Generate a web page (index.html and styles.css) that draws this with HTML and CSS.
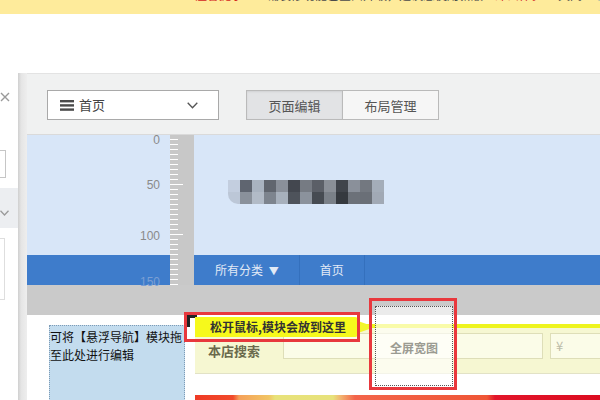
FILE: index.html
```html
<!DOCTYPE html>
<html lang="zh-CN">
<head>
<meta charset="utf-8">
<title>页面编辑</title>
<link rel="stylesheet" href="styles.css">
</head>
<body>
<div class="notice">
  <div class="notice-line"><span class="red">温馨提示：</span><span class="dark">旺铺装修功能已全面升级，建议您使用新版</span><span class="red">立即去体验</span><span class="dark gap">关闭</span><span class="link">帮助中心</span></div>
</div>
<div class="topspace"></div>
<div class="workspace">
  <aside class="side">
    <div class="close">
      <svg width="10" height="10" viewBox="0 0 10 10"><path d="M1 1L9 9M9 1L1 9" stroke="#9a9a9a" stroke-width="1.4" fill="none"/></svg>
    </div>
    <div class="side-input"></div>
    <div class="side-bar">
      <svg width="9" height="6" viewBox="0 0 9 6"><path d="M0.5 0.8L4.5 5L8.5 0.8" stroke="#9a9a9a" stroke-width="1.3" fill="none"/></svg>
    </div>
    <div class="side-box"></div>
  </aside>
  <div class="side-shadow"></div>
  <main class="main">
    <div class="toolbar">
      <div class="select">
        <svg class="menu-icon" width="14" height="11" viewBox="0 0 14 11"><rect x="0" y="0" width="14" height="2.4" fill="#4a4a4a"/><rect x="0" y="4.2" width="14" height="2.4" fill="#4a4a4a"/><rect x="0" y="8.4" width="14" height="2.4" fill="#4a4a4a"/></svg>
        <span class="select-text">首页</span>
        <svg width="11" height="7" viewBox="0 0 11 7"><path d="M0.7 0.7L5.5 5.8L10.3 0.7" stroke="#555" stroke-width="1.3" fill="none"/></svg>
      </div>
      <div class="tabs">
        <div class="tab active">页面编辑</div>
        <div class="tab">布局管理</div>
      </div>
    </div>
    <div class="canvas">
      <div class="header">
        <div class="logo">
          <span></span><span></span><span></span><span></span><span></span><span></span><span></span><span></span><span></span><span></span><span></span><span></span><span></span>
          <span></span><span></span><span></span><span></span><span></span><span></span><span></span><span></span><span></span><span></span><span></span><span></span><span></span>
        </div>
      </div>
      <nav class="nav">
        <div class="nav-item">所有分类 <span class="caret">▼</span></div>
        <div class="nav-item">首页</div>
      </nav>
      <div class="band"></div>
      <div class="content">
        <div class="float-zone">可将【悬浮导航】模块拖至此处进行编辑</div>
        <div class="modules">
          <div class="search">
            <span class="search-label">本店搜索</span>
            <div class="search-input"></div>
            <div class="price-input">¥</div>
          </div>
          <div class="promo"></div>
        </div>
      </div>

      <div class="ruler">
        <span class="tick-long t50"></span>
        <span class="tick-long t100"></span>
        <span class="rl r0">0</span>
        <span class="rl r50">50</span>
        <span class="rl r100">100</span>
        <span class="rl r150">150</span>
      </div>

      <div class="drop-corner"></div>
      <div class="drop-tip">松开鼠标,模块会放到这里</div>
      <div class="mark mark-tip"></div>
      <div class="wide-block">全屏宽图</div>
      <div class="mark mark-wide"></div>
    </div>
  </main>
</div>
</body>
</html>
```

FILE: styles.css
```css
* { box-sizing: border-box; margin: 0; padding: 0; }
html, body { width: 600px; height: 400px; overflow: hidden; background: #fff; }
body { font-family: "Noto Sans CJK SC", "Noto Sans", sans-serif; font-size: 12px; color: #333; }

/* top notice (only the lower edge of its text line is in view) */
.notice { height: 14px; background: #feeb9b; overflow: hidden; }
.notice-line { margin-top: -11px; padding-left: 195px; font-size: 12px; line-height: 12px; white-space: nowrap; }
.notice .red { color: #d3241c; }
.notice .dark { color: #4a4a4a; }
.notice .gap { margin-left: 15px; margin-right: 11px; }
.notice .link { color: #7193ab; }

.topspace { height: 59px; }

/* workspace */
.workspace { display: flex; height: 327px; }

.side { width: 18px; flex: none; background: #fff; overflow: hidden; display: flex; flex-direction: column; }
.close { margin-top: 19px; height: 10px; line-height: 0; }
.side-input { margin-top: 48px; margin-left: -100px; width: 106px; height: 28px; flex: none; border: 1px solid #c6c6c6; background: #fff; }
.side-bar { margin-top: 10px; height: 40px; flex: none; background: #eceef1; padding-top: 22px; line-height: 0; }
.side-box { margin-top: 10px; margin-left: -100px; width: 105px; height: 62px; flex: none; border: 1px solid #dedede; }

.side-shadow { width: 9px; flex: none; background: linear-gradient(to right, #cfcfcf, #e5e5e5 35%, #eeeeee); }

.main { flex: 1; min-width: 0; display: flex; flex-direction: column; }

/* toolbar */
.toolbar { height: 62px; flex: none; background: #f0f1f1; border-top: 1px solid #e3e3e3; border-bottom: 1px solid #dadada; padding: 16px 0 0 20px; display: flex; align-items: flex-start; gap: 27px; }
.select { width: 172px; height: 30px; border: 1px solid #a9a9a9; background: #fff; display: flex; align-items: center; padding: 0 20px 0 12px; }
.menu-icon { flex: none; }
.select-text { flex: 1; margin-left: 5px; font-size: 13px; color: #444; line-height: 28px; }
.tabs { display: flex; }
.tab { width: 97px; height: 30px; border: 1px solid #bababa; background: #f6f6f6; font-size: 13px; color: #555; display: flex; align-items: center; justify-content: center; }
.tab + .tab { border-left: none; width: 96px; }
.tab.active { background: #e2e3e5; box-shadow: inset 0 1px 2px rgba(0,0,0,0.08); }

/* canvas */
.canvas { position: relative; flex: 1; }
.header { height: 120px; background: #d8e6f8; padding: 45px 0 0 201px; }
.logo { display: grid; grid-template-columns: repeat(13, 12px); grid-auto-rows: 12px; width: max-content; }
.logo span { display: block; }
.logo span:nth-child(1) { background: #c3cedf; }
.logo span:nth-child(2) { background: #5f6570; }
.logo span:nth-child(3) { background: #a9b3c0; }
.logo span:nth-child(4) { background: #60656e; }
.logo span:nth-child(5) { background: #8a909a; }
.logo span:nth-child(6) { background: #43474f; }
.logo span:nth-child(7) { background: #767b83; }
.logo span:nth-child(8) { background: #5b5f67; }
.logo span:nth-child(9) { background: #8a8f97; }
.logo span:nth-child(10) { background: #40444b; }
.logo span:nth-child(11) { background: #8a909a; }
.logo span:nth-child(12) { background: #737880; }
.logo span:nth-child(13) { background: #a4adb9; }
.logo span:nth-child(14) { background: #bcc7d7; border-bottom-left-radius: 10px; }
.logo span:nth-child(15) { background: #8a919b; }
.logo span:nth-child(16) { background: #b2bbc7; }
.logo span:nth-child(17) { background: #7d848e; }
.logo span:nth-child(18) { background: #a7b0bc; }
.logo span:nth-child(19) { background: #4e535b; }
.logo span:nth-child(20) { background: #8b929c; }
.logo span:nth-child(21) { background: #464b52; }
.logo span:nth-child(22) { background: #7a8088; }
.logo span:nth-child(23) { background: #35393f; }
.logo span:nth-child(24) { background: #6c7179; }
.logo span:nth-child(25) { background: #6a6f77; }
.logo span:nth-child(26) { background: #a1a9b5; }

.nav { height: 30px; background: #3e7ccb; display: flex; padding-left: 168px; }
.nav-item { padding: 0 20px; line-height: 30px; color: #e2eaf6; font-size: 12px; border-right: 1px solid #3470bd; }
.caret { font-size: 10px; margin-left: 3px; }

.band { height: 30px; background: #cacaca; }

.content { display: flex; height: 85px; padding-top: 9px; }
.float-zone { margin-top: 1px; margin-left: 22px; width: 136px; height: 80px; background: #c3dcee; border: 1px dotted #7d9bb6; border-bottom: none; padding-top: 2px; font-size: 12px; line-height: 18px; color: #111; }
.modules { flex: 1; margin-left: 10px; display: flex; flex-direction: column; }
.search { height: 50px; flex: none; border-top: 4px solid #eef41e; border-bottom: 1px solid #e2e2c6; background: #f6f7d2; display: flex; align-items: flex-start; padding: 5px 0 0 13px; }
.search-label { width: 75px; flex: none; margin-top: 5px; line-height: 26px; font-size: 13px; font-weight: bold; color: #6a6a4c; }
.search-input { width: 260px; height: 26px; flex: none; border: 1px solid #dedeb8; background: #fbfce8; }
.price-input { flex: 1; margin-left: 7px; height: 26px; border: 1px solid #dedeb8; border-right: none; background: #fbfce8; padding-left: 5px; line-height: 24px; font-size: 13px; color: #bdbdaa; }
.promo { margin-top: 21px; height: 10px; flex: none;
  background: linear-gradient(to right, #ef3a25 0, #f14a2b 38px, #f5a059 44px, #f1c564 74px, #e8e27a 80px, #e7e27b 138px, #f2b26f 146px, #f3644a 160px, #ef5636 292px, #e2162a 300px, #dc0c20 405px); }

/* ruler overlay */
.ruler { position: absolute; left: 143px; top: 0; width: 24px; height: 150px; background-color: #c8c8c8;
  background-image: repeating-linear-gradient(to bottom, transparent 0 4px, #ffffff 4px 5px);
  background-size: 8px 150px; background-repeat: no-repeat; }
.tick-long { position: absolute; left: 0; width: 13px; height: 1px; background: #fff; }
.t50 { top: 49px; }
.t100 { top: 99px; }
.rl { position: absolute; right: calc(100% + 10px); font-family: "Liberation Sans", Arial, sans-serif; font-size: 12px; line-height: 12px; color: #8a8a8a; }
.r0 { top: -1px; }
.r50 { top: 44px; }
.r100 { top: 95px; }
.r150 { top: 141px; color: #7b9fd3; }

/* drag feedback overlays */
.drop-corner { position: absolute; left: 160px; top: 180px; width: 10px; height: 12px; border-top: 3px solid #222; border-left: 3px solid #222; }
.drop-tip { position: absolute; left: 168px; top: 182px; width: 163px; height: 20px; background: #f6f91c; border-radius: 0 3px 3px 0; padding-left: 15px; font-size: 12px; line-height: 20px; font-weight: bold; color: #333; white-space: nowrap; }
.drop-tip::after { content: ""; position: absolute; left: 163px; top: 4px; border-left: 17px solid #f3f62a; border-top: 6px solid transparent; border-bottom: 6px solid transparent; }
.mark { position: absolute; border: 3px solid #e8383d; }
.mark-tip { left: 157px; top: 177px; width: 176px; height: 30px; }
.wide-block { position: absolute; left: 348px; top: 171px; width: 78px; height: 80px; border: 1px dotted #555; background: rgba(255,255,255,0.62); display: flex; align-items: center; justify-content: center; font-size: 12px; font-weight: bold; color: #9b9b92; padding-top: 2px; }
.mark-wide { left: 342px; top: 163px; width: 88px; height: 92px; }
```
